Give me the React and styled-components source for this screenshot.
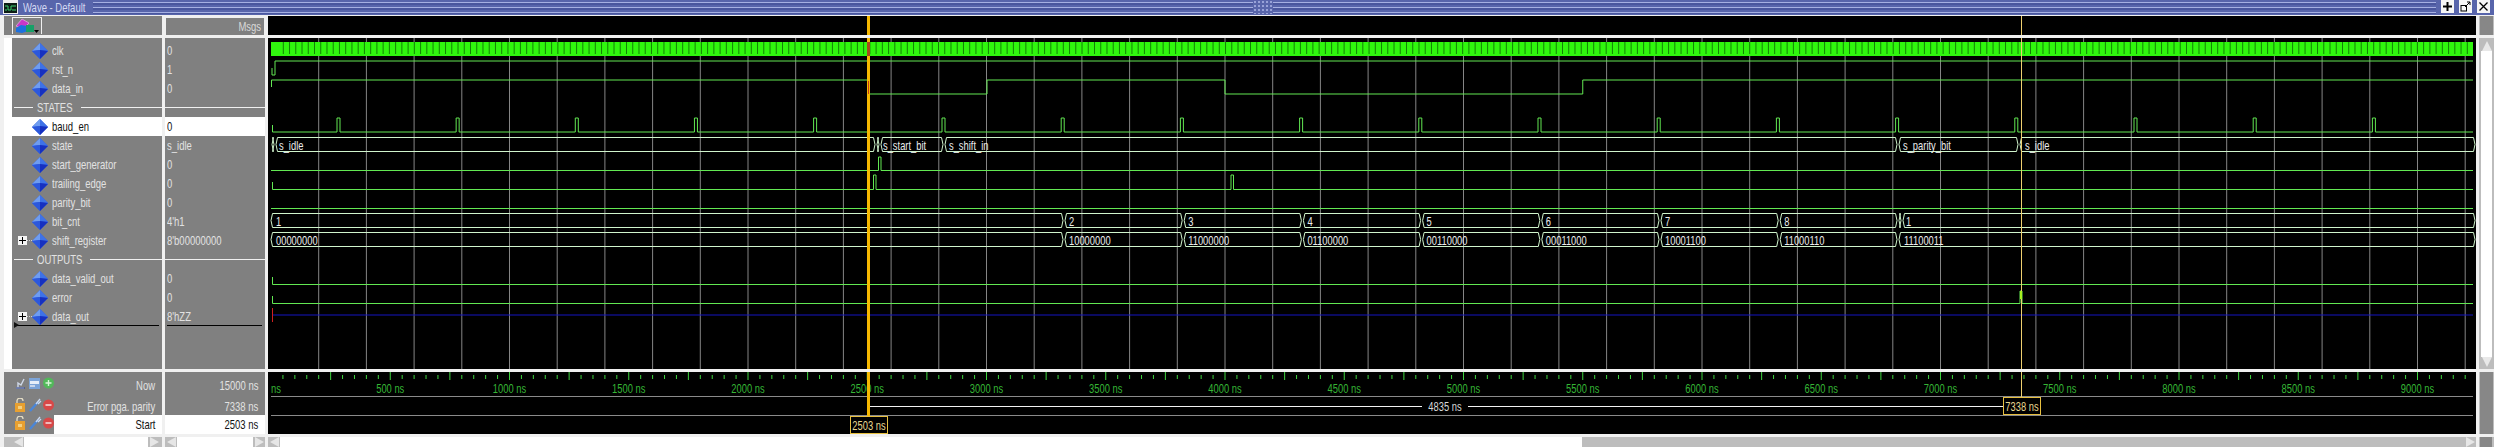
import React from "react";
import styled, { createGlobalStyle } from "styled-components";

const X0 = 271;
const XEND = 2473;
const PX = 0.2385;
const tx = (t) => X0 + t * PX;
const CUR2 = 2021;

const Global = createGlobalStyle`
  html, body { margin: 0; padding: 0; background: #f0f0f0; overflow: hidden; }
  #root { width: 2494px; height: 447px; overflow: hidden; }
`;

const Page = styled.div`
  width: 2494px;
  height: 447px;
  display: flex;
  flex-direction: column;
  font-family: "Liberation Sans", Arial, sans-serif;
  background: #f4f4f4;
  overflow: hidden;
`;

const TitleBar = styled.header`
  height: 15px;
  flex: none;
  display: flex;
  align-items: stretch;
  background: #5865ab;
  border-bottom: 1px solid #f0f0f0;
  padding-left: 3px;
`;
const TitleText = styled.div`
  width: 70px;
  margin-left: 5px;
  color: #d4d9f2;
  font-size: 13px;
  line-height: 13px;
  white-space: nowrap;
`;
const Grip = styled.div`
  flex: ${(p) => (p.$w ? `0 0 ${p.$w}px` : 1)};
  background: repeating-linear-gradient(
    to bottom,
    #5865ab 0, #5865ab 2px, #a6b0e2 2px, #a6b0e2 3px, #4a579e 3px, #4a579e 5px
  );
  height: 14px;
`;
const GripDots = styled.div`
  flex: 0 0 20px;
  height: 14px;
  background-color: #5865ab;
  background-image: radial-gradient(#98a2d8 1px, transparent 1px);
  background-size: 4px 4px;
`;
const WinButtons = styled.div`
  display: flex;
  gap: 5px;
  padding: 0 4px 0 5px;
`;
const WinButton = styled.div`
  width: 13px;
  height: 13px;
  background: #f6f6f6;
  display: flex;
  align-items: center;
  justify-content: center;
`;

const Panes = styled.div`
  flex: 1;
  display: grid;
  grid-template-columns: 158px 100px 2208px 15px;
  grid-template-rows: 19px 331px 62px 10px;
  column-gap: 3px;
  row-gap: 3px;
  padding-left: 4px;
  background: #f0f0f0;
`;

const Label = styled.span`
  display: inline-block;
  font-size: 13px;
  line-height: 15px;
  white-space: nowrap;
  transform: scaleX(0.73);
  transform-origin: ${(p) => (p.$right ? "right" : "left")} center;
  width: ${(p) => (p.$w ? `${p.$w}px` : "auto")};
`;

const GrayHead = styled.div`
  background: #808080;
  padding: 1px 8px;
`;
const ToolButton = styled.div`
  width: 28px;
  height: 16px;
  border: 1px solid #f0f0f0;
  border-bottom-width: 0;
  background: #808080;
  display: flex;
`;
const MsgsBox = styled.div`
  height: 17px;
  background: #808080;
  border: 1px solid #f0f0f0;
  margin-top: 1px;
  display: flex;
  align-items: center;
  justify-content: flex-end;
  padding-right: 3px;
  color: #d8d8d8;
`;
const BlackPane = styled.div`
  background: #000;
  overflow: hidden;
`;
const Drawing = styled.svg`
  display: block;
  font-family: "Liberation Sans", Arial, sans-serif;
  font-size: 13px;
`;
const VBarTop = styled.div`
  background: #bdbdbd;
  padding: 0 1px;
  display: flex;
`;
const VBarFill = styled.div`
  flex: 1;
  background: #878787;
`;

const NamesPane = styled.div`
  background: #fff;
  padding-left: 8px;
  display: flex;
`;
const GrayColumn = styled.div`
  flex: 1;
  background: #808080;
  padding-top: 3px;
  display: flex;
  flex-direction: column;
`;
const Row = styled.div`
  height: 19px;
  flex: none;
  display: flex;
  align-items: center;
  background: ${(p) => (p.$selected ? "#fff" : "transparent")};
  color: ${(p) => (p.$selected ? "#111" : "#e2e2e2")};
`;
const ExpandSlot = styled.div`
  width: 14px;
  margin-left: 6px;
  flex: none;
  display: flex;
  align-items: center;
`;
const Expander = styled.div`
  width: 9px;
  height: 9px;
  background: #f4f4f4;
  position: relative;
  &::before { content: ""; position: absolute; left: 1px; right: 1px; top: 4px; height: 1px; background: #000; }
  &::after { content: ""; position: absolute; top: 1px; bottom: 1px; left: 4px; width: 1px; background: #000; }
`;
const DotLeader = styled.div`
  flex: 1;
  border-top: 1px dotted #d0d0d0;
`;
const DiamondBox = styled.div`
  width: 16px;
  height: 16px;
  margin-right: 4px;
  flex: none;
`;
const ValueColumn = styled.div`
  background: #808080;
  padding-top: 3px;
  display: flex;
  flex-direction: column;
`;
const ValueRow = styled(Row)`
  padding-left: 2px;
`;
const DividerRow = styled.div`
  height: 19px;
  flex: none;
  display: flex;
  align-items: center;
  padding-left: ${(p) => p.$pl || 0}px;
  color: #e2e2e2;
`;
const DividerLine = styled.div`
  height: 1px;
  background: #f0f0f0;
  flex: ${(p) => (p.$w ? `0 0 ${p.$w}px` : 1)};
  margin-right: ${(p) => (p.$w ? "4px" : 0)};
`;
const EndLine = styled.div`
  height: 1px;
  margin: -1px 3px 0 5px;
  background: #000;
  position: relative;
  &::before {
    content: "";
    position: absolute;
    left: -3px;
    top: -3px;
    border-left: 5px solid #111;
    border-top: 3px solid transparent;
    border-bottom: 3px solid transparent;
  }
`;
const EndLineValue = styled.div`
  height: 1px;
  margin: -1px 3px 0 2px;
  background: #000;
`;

const CursorPane = styled.div`
  background: #808080;
  display: grid;
  grid-template-rows: 26px 17px 19px;
`;
const CursorRow = styled.div`
  display: flex;
  align-items: center;
  color: #e2e2e2;
`;
const CursorIcons = styled.div`
  width: 50px;
  padding-left: 11px;
  flex: none;
  box-sizing: border-box;
  align-self: center;
`;
const CursorName = styled.div`
  flex: 1;
  align-self: stretch;
  display: flex;
  align-items: center;
  justify-content: flex-end;
  padding-right: 7px;
  background: ${(p) => (p.$selected ? "#fff" : "transparent")};
  color: ${(p) => (p.$selected ? "#111" : "#e2e2e2")};
`;

const VBarMiddle = styled.div`
  background: #bdbdbd;
  padding: 0 2px;
  display: flex;
  flex-direction: column;
`;
const VTrack = styled.div`
  flex: 1;
  background: #fff;
  margin-top: 1px;
`;
const VArrow = styled.div`
  height: 12px;
  background: #bdbdbd;
  display: flex;
  align-items: ${(p) => (p.$down ? "flex-start" : "flex-end")};
  justify-content: center;
`;
const TriUp = styled.div`
  border-left: 5px solid transparent;
  border-right: 5px solid transparent;
  ${(p) => (p.$down ? "border-top: 10px solid #e8e8e8;" : "border-bottom: 10px solid #e8e8e8;")}
`;

const HBar = styled.div`
  background: #bdbdbd;
  display: flex;
  padding-left: ${(p) => p.$pl || 0}px;
  padding-right: ${(p) => p.$pr || 0}px;
  align-items: stretch;
`;
const HArrow = styled.div`
  flex: 0 0 12px;
  display: flex;
  align-items: center;
  justify-content: center;
`;
const Tri = styled.div`
  border-top: 5px solid transparent;
  border-bottom: 5px solid transparent;
  ${(p) => (p.$right ? "border-left: 9px solid #e6e6e6;" : "border-right: 9px solid #e6e6e6;")}
`;
const HThumb = styled.div`
  flex: ${(p) => (p.$w ? `0 0 ${p.$w}px` : 1)};
  background: #fff;
`;
const HSpace = styled.div`
  flex: 1;
`;
const HCorner = styled.div`
  background: #bdbdbd;
  padding: 0 2px 0 1px;
  display: flex;
`;

const WaveText = styled.text`
  fill: ${(p) => p.$fill || "#ececec"};
`;

const SIGNALS = [
  { name: "clk", value: "0" },
  { name: "rst_n", value: "1" },
  { name: "data_in", value: "0" },
  { divider: "STATES", w: 44, lead: 19 },
  { name: "baud_en", value: "0", selected: true },
  { name: "state", value: "s_idle" },
  { name: "start_generator", value: "0" },
  { name: "trailing_edge", value: "0" },
  { name: "parity_bit", value: "0" },
  { name: "bit_cnt", value: "4'h1" },
  { name: "shift_register", value: "8'b00000000", expand: true },
  { divider: "OUTPUTS", w: 53, lead: 19 },
  { name: "data_valid_out", value: "0" },
  { name: "error", value: "0" },
  { name: "data_out", value: "8'hZZ", expand: true },
];

function Diamond() {
  return (
    <svg width="16" height="16" viewBox="0 0 16 16">
      <polygon points="8,0 16,8 8,16 0,8" fill="#2f5be0" />
      <polygon points="8,0 0,8 8,7" fill="#6f9df0" />
      <polygon points="8,0 16,8 8,7" fill="#3e72e8" />
      <polygon points="16,8 8,16 8,7" fill="#1630c0" />
      <polygon points="0,8 8,16 8,7" fill="#2c58dc" />
    </svg>
  );
}

function GroupIcon() {
  return (
    <svg width="26" height="16" viewBox="0 0 26 16">
      <polygon points="3,8 9,1 16,5 10,11" fill="#c838c8" stroke="#f0c0f0" strokeWidth="0.6" />
      <polygon points="3,10 8,7 14,8 15,13 9,15 3,14" fill="#1c70e0" />
      <rect x="13" y="7" width="8" height="7" fill="#18a068" />
      <polygon points="21,12 26,12 23.5,15" fill="#000" />
    </svg>
  );
}

function CursorTools({ add }) {
  if (add) {
    return (
      <svg width="40" height="14" viewBox="0 0 40 14">
        <path d="M1 12 H9 M3 12 V7 L6 9 L9 3" stroke="#cfd8e8" strokeWidth="1.4" fill="none" />
        <path d="M1 12 H10" stroke="#3a4c90" strokeWidth="1.2" />
        <rect x="14" y="2" width="11" height="11" fill="#7ca4d8" />
        <rect x="15" y="5" width="9" height="3" fill="#e6eef8" />
        <rect x="15" y="9" width="5" height="2" fill="#c9d6ea" />
        <circle cx="33.5" cy="7" r="5.5" fill="#52b85a" />
        <path d="M30.5 7 H36.5 M33.5 4 V10" stroke="#d8f2d8" strokeWidth="1.4" />
      </svg>
    );
  }
  return (
    <svg width="40" height="14" viewBox="0 0 40 14">
      <rect x="0" y="5" width="10" height="9" fill="#e8a030" />
      <path d="M2 5 V3 A3 3 0 0 1 8 3" stroke="#e8e0c8" strokeWidth="1.3" fill="none" />
      <rect x="3" y="8" width="4" height="3" fill="#f4d080" />
      <path d="M15 13 L23 4" stroke="#4a86d8" strokeWidth="2.4" />
      <path d="M21 6 L25 1 M23 6 L26 3" stroke="#c8d8f0" strokeWidth="1.3" />
      <circle cx="33.5" cy="7" r="5.5" fill="#d84848" />
      <path d="M30.5 7 H36.5" stroke="#f4d8d8" strokeWidth="1.6" />
    </svg>
  );
}

function SqText({ x, y, children, anchor, fill }) {
  return (
    <WaveText
      $fill={fill}
      transform={`translate(${x} ${y}) scale(0.72 1)`}
      textAnchor={anchor || "start"}
    >
      {children}
    </WaveText>
  );
}

function bus(points, top, bot) {
  const mid = (top + bot) / 2;
  return points
    .slice(0, -1)
    .map((s, i) => {
      const e = points[i + 1];
      const a = s + 2.5;
      const b = e - 2.5;
      return `M${s + 1} ${mid} L${a} ${top} H${b} L${e - 1} ${mid} L${b} ${bot} H${a} Z`;
    })
    .join(" ");
}

const range = (n) => Array.from({ length: n }, (_, i) => i);

const GRID = range(47).map((k) => X0 + 47.7 * (k + 1));
const CLOCK_GAPS = range(352).map((k) => 283.3 + 6.24 * k).filter((x) => x < XEND - 2);
const BAUD = [
  ...range(5).map((k) => 337 + 119.15 * k),
  ...range(13).map((k) => 942 + 119.2 * k),
];

function pulses(list, hi, lo, w) {
  const seg = list.map((x) => `H${x} V${hi} H${x + w} V${lo}`).join(" ");
  return `${seg} H${XEND}`;
}

const CNT_X = range(7).map((k) => 1064 + 119.2 * k);
const CNT_VALUES = ["2", "3", "4", "5", "6", "7", "8"];
const REG_VALUES = ["10000000", "11000000", "01100000", "00110000", "00011000", "10001100", "11000110"];

function WaveDrawing() {
  const green = "#62e852";
  const busColor = "#d0f4cc";
  return (
    <Drawing width="2208" height="331" viewBox="268 38 2208 331">
      {GRID.map((x) => (
        <path key={x} d={`M${x} 38 V369`} stroke="#858585" strokeWidth="1" />
      ))}
      <rect x="271" y="42" width={XEND - 271} height="14" fill="#30f60e" />
      {CLOCK_GAPS.map((x) => (
        <path key={x} d={`M${x} 42 V54`} stroke="#128006" strokeWidth="1" />
      ))}
      <path d={`M272 68 V75 H275 V61 H${XEND}`} stroke={green} fill="none" />
      <path
        d={`M271.5 87 V80 H868 V94 H987 V80 H${tx(4000)} V94 H${tx(5500)} V80 H${XEND}`}
        stroke={green}
        fill="none"
      />
      <path d={`M272.5 125 V132 ${pulses(BAUD, 118, 132, 3)}`} stroke={green} fill="none" />
      <path d={bus([271, 275, 876, 880, 944, 1898, 2019, XEND + 3], 137.5, 151.5)} stroke={busColor} fill="none" />
      <SqText x={279} y={150}>s_idle</SqText>
      <SqText x={883} y={150}>s_start_bit</SqText>
      <SqText x={949} y={150}>s_shift_in</SqText>
      <SqText x={1903} y={150}>s_parity_bit</SqText>
      <SqText x={2025} y={150}>s_idle</SqText>
      <path d={`M271 170.5 ${pulses([878.5], 157, 170.5, 2.5)}`} stroke={green} fill="none" />
      <path d={`M272.5 182 V189.5 ${pulses([873.5, 1231], 175, 189.5, 2.5)}`} stroke={green} fill="none" />
      <path d={`M271 208.5 H${XEND}`} stroke={green} />
      <path d={bus([270, ...CNT_X, 1898, 1902, XEND + 3], 213.5, 227.5)} stroke={busColor} fill="none" />
      <SqText x={276} y={226}>1</SqText>
      {CNT_VALUES.map((v, i) => (
        <SqText key={v} x={CNT_X[i] + 5} y={226}>{v}</SqText>
      ))}
      <SqText x={1906} y={226}>1</SqText>
      <path d={bus([270, ...CNT_X, 1898, XEND + 3], 232.5, 246.5)} stroke={busColor} fill="none" />
      <SqText x={276} y={245}>00000000</SqText>
      {REG_VALUES.map((v, i) => (
        <SqText key={v} x={CNT_X[i] + 5} y={245}>{v}</SqText>
      ))}
      <SqText x={1904} y={245}>11100011</SqText>
      <path d={`M272.5 277 V284.5 H${XEND}`} stroke={green} fill="none" />
      <path d={`M272.5 296 V303.5 H2020 V291 H2022 V303.5 H${XEND}`} stroke={green} fill="none" />
      <path d="M272.5 308 V322" stroke="#d02020" />
      <path d={`M273 315 H${XEND}`} stroke="#1414c0" />
      <rect x="867" y="38" width="3" height="331" fill="#f6b800" />
      <rect x="867" y="42" width="3" height="14" fill="#a84a1c" />
      <path d="M868.5 81 V94" stroke="#c83c14" />
      <path d={`M${CUR2 + 0.5} 38 V369`} stroke="#efd070" />
      <rect x="2020" y="291" width="2" height="8" fill="#a8f020" />
    </Drawing>
  );
}

const TICKS = range(185).map((k) => ({ x: X0 + 11.925 * k, big: k % 5 === 0 }));
const TIME_LABELS = range(18).map((k) => (k + 1) * 500);

function CursorDrawing() {
  const gold = "#e8c040";
  return (
    <Drawing width="2208" height="62" viewBox="268 372 2208 62">
      {TICKS.filter((t) => t.x > 272).map((t) => (
        <path
          key={t.x}
          d={`M${t.x} ${t.big ? 372 : 375} V${t.big ? 380 : 379}`}
          stroke="#3fd43f"
        />
      ))}
      <SqText x={271} y={393} fill="#35b535">ns</SqText>
      {TIME_LABELS.map((t) => (
        <SqText key={t} x={tx(t)} y={393} anchor="middle" fill="#35b535">
          {t + " ns"}
        </SqText>
      ))}
      <path d={`M271 396.5 H${XEND}`} stroke="#8a8a8a" />
      <path d={`M271 415.5 H${XEND}`} stroke="#8a8a8a" />
      <path d="M870 406.5 H2003" stroke="#f2f2f2" />
      <rect x="1422" y="400" width="46" height="13" fill="#000" />
      <SqText x={1445} y={411} anchor="middle" fill="#d8d8d8">4835 ns</SqText>
      <rect x="867" y="372" width="3" height="44" fill="#f6b800" />
      <path d={`M${CUR2 + 0.5} 372 V397`} stroke="#efd070" />
      <rect x="850.5" y="416.5" width="37" height="17" fill="#000" stroke={gold} />
      <SqText x={869} y={430} anchor="middle" fill="#e8d890">2503 ns</SqText>
      <rect x="2003.5" y="397.5" width="37" height="17" fill="#000" stroke={gold} />
      <SqText x={2022} y={411} anchor="middle" fill="#e8d890">7338 ns</SqText>
    </Drawing>
  );
}

function HeaderDrawing() {
  return (
    <Drawing width="2208" height="19" viewBox="268 16 2208 19">
      <rect x="867" y="16" width="3" height="19" fill="#f6b800" />
      <path d={`M${CUR2 + 0.5} 16 V35`} stroke="#efd070" />
    </Drawing>
  );
}

function HScroll({ pl, pr }) {
  return (
    <HBar $pl={pl} $pr={pr}>
      <HArrow><Tri /></HArrow>
      <HThumb />
      <HArrow><Tri $right /></HArrow>
    </HBar>
  );
}

export default function App() {
  return (
    <Page>
      <Global />
      <TitleBar>
        <svg width="15" height="14" viewBox="0 0 15 14">
          <rect width="15" height="14" fill="#f0f0f0" />
          <rect x="1" y="3" width="13" height="10" fill="#0c1c14" />
          <path d="M2 6 H5 V10 H8 V6 H13 M2 10 H4 M9 10 H13" stroke="#3cd070" fill="none" />
        </svg>
        <TitleText><Label $w={70}>Wave - Default</Label></TitleText>
        <Grip $w={1160} />
        <GripDots />
        <Grip />
        <WinButtons>
          <WinButton>
            <svg width="11" height="11" viewBox="0 0 11 11">
              <path d="M5.5 1 V10 M1 5.5 H10" stroke="#000" strokeWidth="2" />
            </svg>
          </WinButton>
          <WinButton>
            <svg width="11" height="11" viewBox="0 0 11 11">
              <rect x="1" y="4.5" width="5.5" height="5.5" fill="none" stroke="#000" />
              <path d="M5 6 L10 1 M7 1 H10 V4" stroke="#000" fill="none" />
            </svg>
          </WinButton>
          <WinButton>
            <svg width="11" height="11" viewBox="0 0 11 11">
              <path d="M1.5 1.5 L9.5 9.5 M9.5 1.5 L1.5 9.5" stroke="#000" strokeWidth="1.3" />
            </svg>
          </WinButton>
        </WinButtons>
      </TitleBar>
      <Panes>
        <GrayHead>
          <ToolButton><GroupIcon /></ToolButton>
        </GrayHead>
        <MsgsBox><Label $right>Msgs</Label></MsgsBox>
        <BlackPane><HeaderDrawing /></BlackPane>
        <VBarTop><VBarFill /></VBarTop>

        <NamesPane>
          <GrayColumn>
            {SIGNALS.map((s) =>
              s.divider ? (
                <DividerRow key={s.divider} $pl={2}>
                  <DividerLine $w={s.lead} />
                  <Label $w={s.w}>{s.divider}</Label>
                  <DividerLine />
                </DividerRow>
              ) : (
                <Row key={s.name} $selected={s.selected}>
                  <ExpandSlot>
                    {s.expand ? (
                      <>
                        <Expander />
                        <DotLeader />
                      </>
                    ) : null}
                  </ExpandSlot>
                  <DiamondBox><Diamond /></DiamondBox>
                  <Label>{s.name}</Label>
                </Row>
              )
            )}
            <EndLine />
          </GrayColumn>
        </NamesPane>
        <ValueColumn>
          {SIGNALS.map((s) =>
            s.divider ? (
              <DividerRow key={s.divider}>
                <DividerLine />
              </DividerRow>
            ) : (
              <ValueRow key={s.name} $selected={s.selected}>
                <Label>{s.value}</Label>
              </ValueRow>
            )
          )}
          <EndLineValue />
        </ValueColumn>
        <BlackPane><WaveDrawing /></BlackPane>
        <VBarMiddle>
          <VTrack>
            <VArrow><TriUp /></VArrow>
          </VTrack>
          <VArrow $down><TriUp $down /></VArrow>
        </VBarMiddle>

        <CursorPane>
          <CursorRow>
            <CursorIcons><CursorTools add /></CursorIcons>
            <CursorName><Label $right>Now</Label></CursorName>
          </CursorRow>
          <CursorRow>
            <CursorIcons><CursorTools /></CursorIcons>
            <CursorName><Label $right>Error pga. parity</Label></CursorName>
          </CursorRow>
          <CursorRow>
            <CursorIcons><CursorTools /></CursorIcons>
            <CursorName $selected><Label $right>Start</Label></CursorName>
          </CursorRow>
        </CursorPane>
        <CursorPane>
          <CursorRow><CursorName><Label $right>15000 ns</Label></CursorName></CursorRow>
          <CursorRow><CursorName><Label $right>7338 ns</Label></CursorName></CursorRow>
          <CursorRow><CursorName $selected><Label $right>2503 ns</Label></CursorName></CursorRow>
        </CursorPane>
        <BlackPane><CursorDrawing /></BlackPane>
        <VBarTop><VBarFill /></VBarTop>

        <HScroll pl={8} pr={2} />
        <HScroll />
        <HBar>
          <HArrow><Tri /></HArrow>
          <HThumb $w={1302} />
          <HSpace />
          <HArrow><Tri $right /></HArrow>
        </HBar>
        <HCorner><VBarFill /></HCorner>
      </Panes>
    </Page>
  );
}
